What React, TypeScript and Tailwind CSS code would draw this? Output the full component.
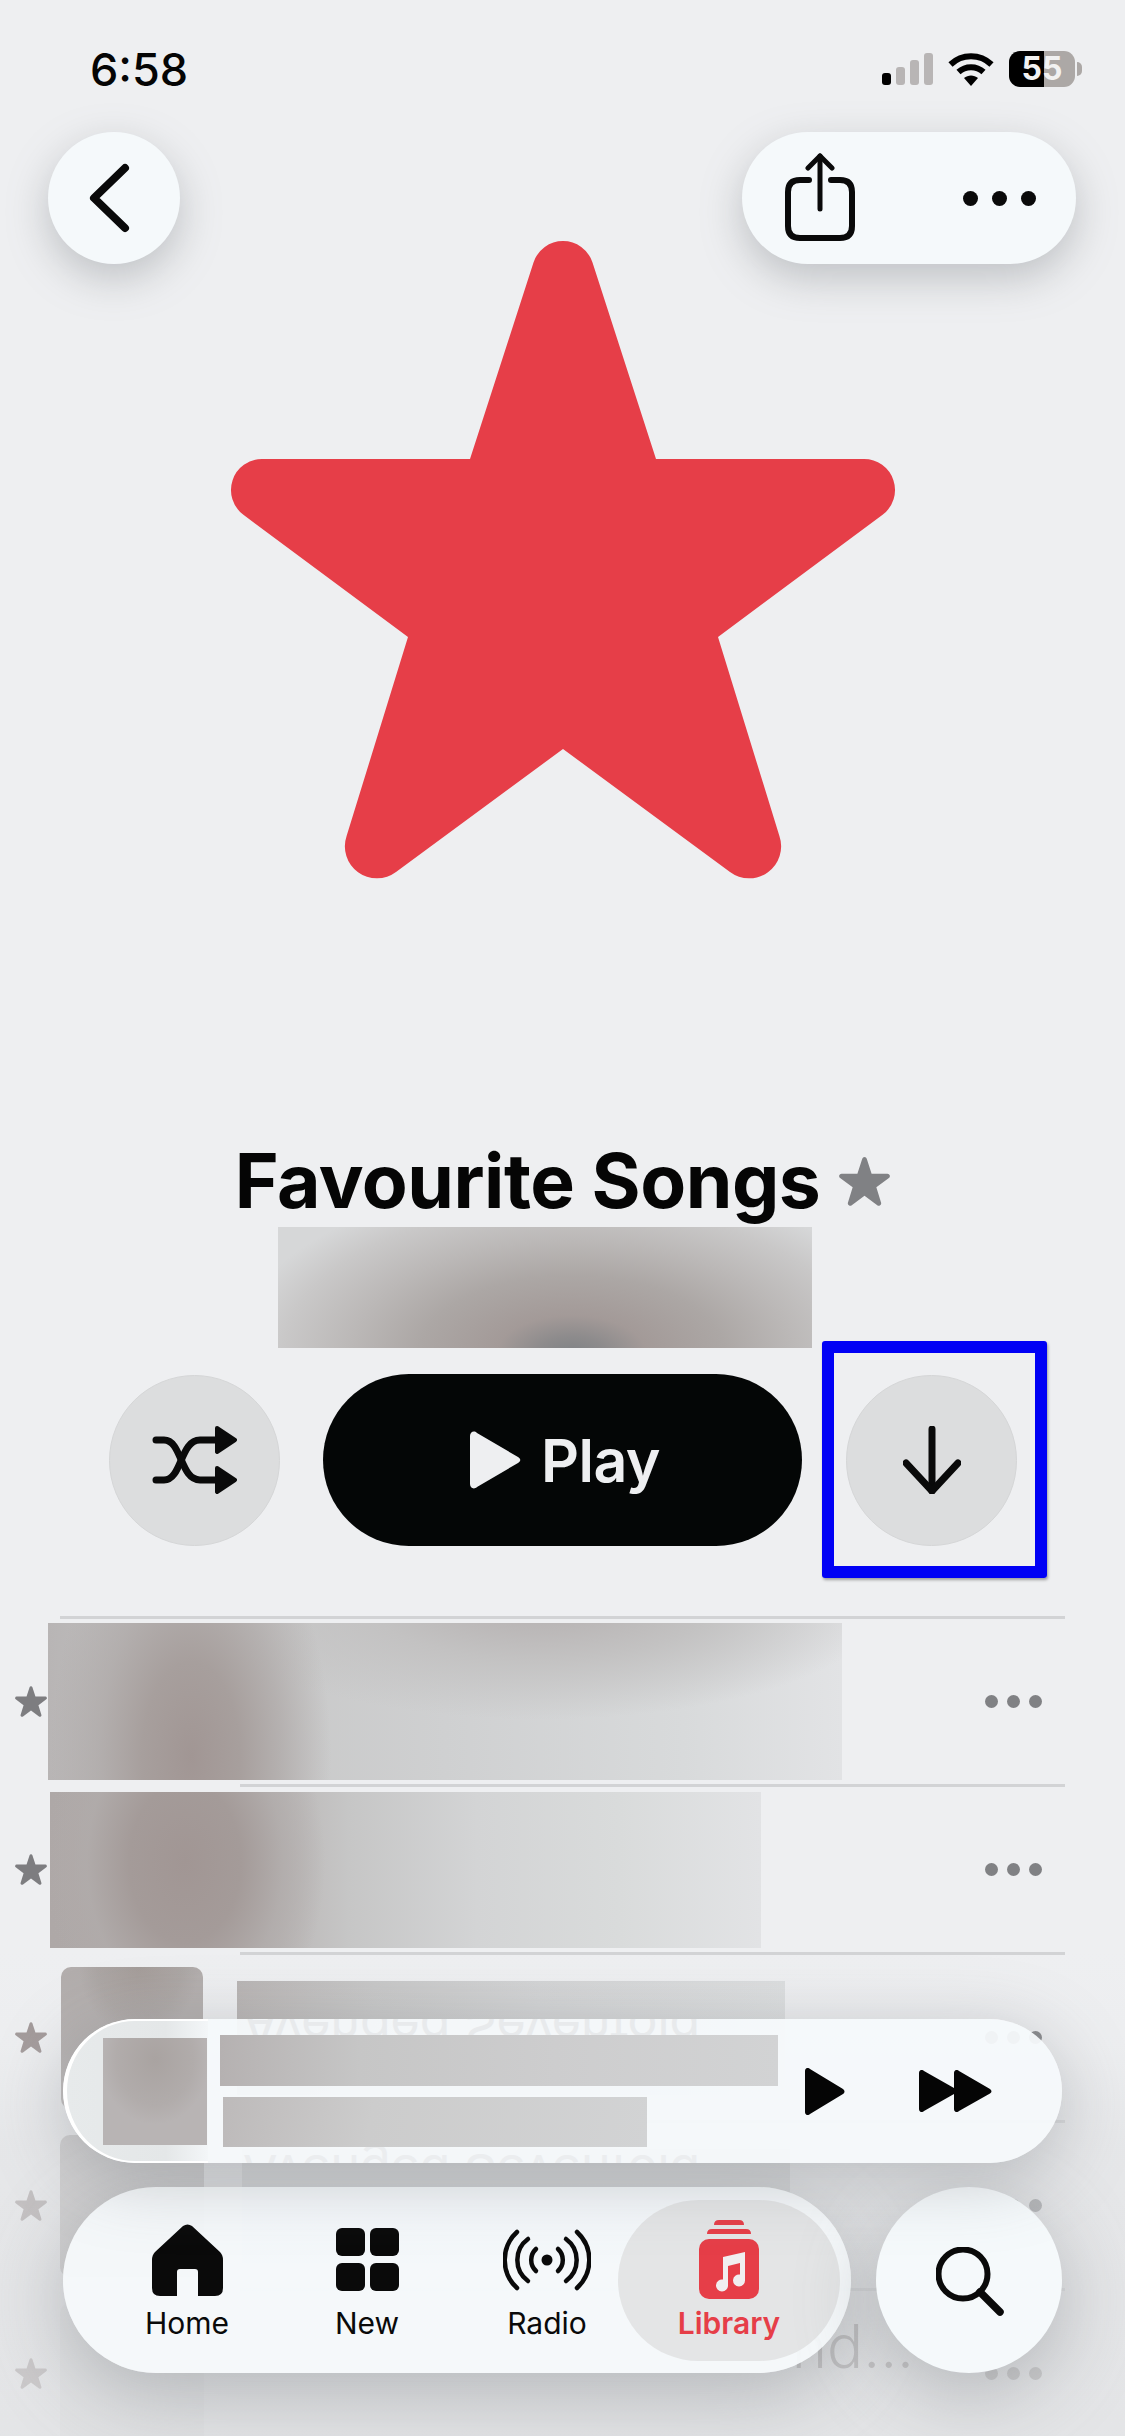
/* Favourite Songs playlist screen: cover star, actions, track rows and floating player + tabs. */

const STAR_PATH =
  "M238 218L301.5 21.5A31 31 0 0 1 360.5 21.5L424 218H632A31 31 0 0 1 650.6 273.8L486 396L547.4 595A32 32 0 0 1 498 631L331 508L164 631A32 32 0 0 1 114.6 595L176 396L11.4 273.8A31 31 0 0 1 30 218Z";

function Star({ className }: { className: string }) {
  return (
    <svg viewBox="-3 0 668 640" className={className} fill="currentColor">
      <path d={STAR_PATH} />
    </svg>
  );
}

function Dots({ className }: { className: string }) {
  return (
    <div className={`flex gap-[9px] ${className}`}>
      <span className="size-[13px] rounded-full bg-current" />
      <span className="size-[13px] rounded-full bg-current" />
      <span className="size-[13px] rounded-full bg-current" />
    </div>
  );
}

function Separator({ inset }: { inset: string }) {
  return <div className={`h-[3px] bg-[#d2d3d5] ${inset}`} />;
}

function TabItem({ label, icon, widthClass }: { label: string; icon: React.ReactNode; widthClass: string }) {
  return (
    <div className={`flex h-[161px] flex-col items-center pt-[20px] ${widthClass}`}>
      <div className="flex h-[80px] items-center">{icon}</div>
      <span className="mt-[5px] text-[30px] leading-[36px] font-normal text-[#0a0a0a]">{label}</span>
    </div>
  );
}

export default function App() {
  return (
    <div className="relative h-[2436px] w-[1125px] overflow-hidden bg-[#eeeff1] [font-family:Inter,sans-serif] text-[#050505]">
      {/* Status bar */}
      <div className="flex h-[132px] items-start justify-between pr-[43px] pl-[90px] pt-[44px]">
        <span className="text-[45px] leading-[52px] font-medium">6:58</span>
        <div className="mt-[7px] flex items-center">
          <div className="flex h-[32px] items-end gap-[5px]">
            <span className="h-[12px] w-[9px] rounded-[3px] bg-black" />
            <span className="h-[18px] w-[9px] rounded-[3px] bg-[#b8b5b5]" />
            <span className="h-[25px] w-[9px] rounded-[3px] bg-[#b8b5b5]" />
            <span className="h-[32px] w-[9px] rounded-[3px] bg-[#b8b5b5]" />
          </div>
          <svg viewBox="0 0 46 33" className="ml-[15px] h-[33px] w-[46px]" fill="none" stroke="#000" strokeWidth="6" strokeLinecap="butt">
            <path d="M2.5 11.5C14 .5 32 .5 43.5 11.5" />
            <path d="M10.5 19C17.5 12.5 28.5 12.5 35.5 19" />
            <path d="M16 25L23 33L30 25C26 21.5 20 21.5 16 25Z" fill="#000" stroke="none" />
          </svg>
          <div className="ml-[15px] flex h-[36px] w-[66px] items-center justify-center rounded-[11px] bg-[linear-gradient(90deg,#000_53%,#aca8a6_53%)] text-[32px] leading-none font-bold text-[#f2f2f2]">
            55
          </div>
          <span className="ml-[2px] h-[14px] w-[5px] rounded-r-full bg-[#aca8a6]" />
        </div>
      </div>

      {/* Top buttons */}
      <div className="flex h-[132px] items-center justify-between pr-[49px] pl-[48px]">
        <button className="flex size-[132px] items-center justify-center rounded-full bg-[#f5f9fb] shadow-[0_14px_40px_rgba(120,125,130,0.4)]">
          <svg viewBox="0 0 44 70" className="mr-[9px] h-[70px] w-[44px]" fill="none" stroke="#0a0a0a" strokeWidth="8" strokeLinecap="round" strokeLinejoin="round">
            <path d="M37 5L6 35L37 65" />
          </svg>
        </button>
        <div className="flex h-[132px] w-[334px] items-center rounded-full bg-[#f5f9fb] pl-[43px] shadow-[0_14px_40px_rgba(120,125,130,0.4)]">
          <svg viewBox="0 0 70 88" className="mb-[2px] h-[88px] w-[70px]" fill="none" stroke="#0a0a0a" strokeWidth="6" strokeLinecap="round" strokeLinejoin="round">
            <path d="M24 27H15C7 27 3 31 3 39V73C3 81 7 85 15 85H55C63 85 67 81 67 73V39C67 31 63 27 55 27H46" />
            <path d="M35 3V56" strokeWidth="5" />
            <path d="M23 15L35 3L47 15" strokeWidth="5" />
          </svg>
          <Dots className="ml-[108px] text-[#0a0a0a] [&>span]:size-[15px] gap-[14px]" />
        </div>
      </div>

      {/* Cover */}
      <div className="-mt-[23px] flex justify-center">
        <Star className="h-[640px] w-[668px] text-[#e63e48]" />
      </div>

      {/* Title */}
      <div className="mt-[255px] flex items-center justify-center gap-[19px]">
        <h1 className="text-[75px] leading-[90px] font-bold tracking-[-0.5px]">Favourite Songs</h1>
        <Star className="h-[49px] w-[51px] text-[#808184]" />
      </div>
      <div className="mt-px ml-[278px] h-[121px] w-[534px] bg-[radial-gradient(ellipse_340px_175px_at_55%_105%,#7f8285_0%,#8d8b8c_10%,#a39a98_22%,#aca7a5_45%,#bbb8b7_65%,#c9c8c8_85%,#d6d7d8_100%)]" />

      {/* Actions */}
      <div className="mt-[26px] flex items-center pl-[109px]">
        <button className="flex size-[171px] items-center justify-center rounded-full border border-[#d5d6d7] bg-[#dcddde]">
          <svg viewBox="0 0 85 68" className="h-[68px] w-[85px]" fill="none" stroke="#0a0a0a" strokeWidth="7" strokeLinecap="round">
            <path d="M4 54H12C30 54 28 14 48 14H66" />
            <path d="M4 14H12C30 14 28 54 48 54H66" />
            <path d="M65 2L83 14L65 26Z" fill="#0a0a0a" strokeWidth="4" strokeLinejoin="round" />
            <path d="M65 42L83 54L65 66Z" fill="#0a0a0a" strokeWidth="4" strokeLinejoin="round" />
          </svg>
        </button>
        <button className="ml-[43px] flex h-[172px] w-[479px] items-center justify-center gap-[20px] rounded-full bg-[#040606] pl-[4px] text-[#eeeff1]">
          <svg viewBox="0 0 52 58" className="h-[58px] w-[52px]" fill="currentColor">
            <path d="M1 5C1 1 5 -1 8 2L49 26C52 28 52 30 49 32L8 56C5 59 1 57 1 53Z" />
          </svg>
          <span className="text-[59px] leading-none font-semibold tracking-[-0.5px]">Play</span>
        </button>
        <div className="relative ml-[44px]">
          <button className="flex size-[171px] items-center justify-center rounded-full border border-[#d5d6d7] bg-[#dcddde]">
            <svg viewBox="0 0 58 68" className="h-[68px] w-[58px]" fill="none" stroke="#0a0a0a" strokeWidth="7" strokeLinecap="round" strokeLinejoin="round">
              <path d="M29 3V65" />
              <path d="M3 37L29 65L55 37" />
            </svg>
          </button>
          {/* Annotation box over the download button */}
          <div className="absolute -top-[34px] -right-[30px] -bottom-[32px] -left-[24px] rounded-[3px] border-[12px] border-[#0000f5] shadow-[1px_2px_3px_rgba(0,0,0,0.35)]" />
        </div>
      </div>

      {/* Track rows */}
      <Separator inset="mt-[70px] ml-[60px] w-[1005px]" />
      <div className="flex h-[165px] items-center pl-[15px]">
        <Star className="h-[31px] w-[32px] text-[#7d7d80]" />
        <div className="ml-px h-[157px] w-[794px] bg-[radial-gradient(ellipse_140px_270px_at_18%_85%,#a19694_0%,#a79f9d_35%,rgba(176,171,170,0.8)_65%,rgba(184,181,181,0)_100%),radial-gradient(ellipse_350px_120px_at_62%_-15%,#b3aeae_0%,#c3c2c2_50%,rgba(200,200,200,0)_100%),linear-gradient(90deg,#b8b5b5_0%,#c8c8c8_25%,#cfd0d1_50%,#d8dadb_80%,#e2e3e5_100%)]" />
        <Dots className="ml-auto mr-[83px] text-[#808184]" />
      </div>
      <Separator inset="ml-[240px] w-[825px]" />
      <div className="flex h-[165px] items-center pl-[15px]">
        <Star className="h-[31px] w-[32px] text-[#7d7d80]" />
        <div className="ml-[3px] h-[156px] w-[711px] bg-[radial-gradient(ellipse_140px_200px_at_19%_45%,#a19694_0%,#a49b99_40%,rgba(176,171,170,0.8)_70%,rgba(184,181,181,0)_100%),linear-gradient(90deg,#aea8a7_0%,#b2acab_25%,#c6c6c6_42%,#d3d4d5_60%,#d9dbdb_80%,#e2e3e5_100%)]" />
        <Dots className="ml-auto mr-[83px] text-[#808184]" />
      </div>
      <Separator inset="ml-[240px] w-[825px]" />
      <div className="flex h-[165px] items-center pl-[15px]">
        <Star className="h-[31px] w-[32px] text-[#9d9494]" />
        <div className="ml-[14px] h-[142px] w-[142px] rounded-[10px] bg-[radial-gradient(ellipse_60px_70px_at_55%_0%,#a39b98_0%,#aaa4a2_70%,#b1acab_100%)]" />
        <div className="ml-[34px] h-[114px] w-[548px] bg-[linear-gradient(90deg,#b7b3b2_0%,#c6c6c6_25%,#d2d3d4_55%,#dcdedf_100%)]" />
        <Dots className="ml-auto mr-[83px] text-[#808184]" />
      </div>
      <Separator inset="ml-[240px] w-[825px]" />
      <div className="flex h-[165px] items-center pl-[15px]">
        <Star className="h-[31px] w-[32px] text-[#9d9494]" />
        <div className="ml-[13px] h-[142px] w-[144px] rounded-[10px] bg-[#bdbaba]" />
        <div className="ml-[38px] h-[114px] w-[548px] bg-[#d2d3d4]" />
        <Dots className="ml-auto mr-[83px] text-[#808184]" />
      </div>
      <Separator inset="ml-[240px] w-[825px]" />
      <div className="flex h-[165px] items-center pl-[15px]">
        <Star className="h-[31px] w-[32px] text-[#9d9494]" />
        <div className="ml-[13px] h-[142px] w-[144px] rounded-[10px] bg-[#e4e5e6]" />
        <div className="mb-[56px] ml-[33px] w-[677px] text-right text-[60px] leading-none font-light text-[#8f8a8a]">nd...</div>
        <Dots className="ml-auto mr-[83px] text-[#9d9a9a]" />
      </div>

      {/* Fade under the floating bars */}
      <div className="pointer-events-none absolute inset-x-0 top-[1950px] bottom-0 bg-[linear-gradient(180deg,rgba(226,227,229,0)_0%,rgba(226,227,229,0.1)_20%,rgba(224,225,227,0.55)_40%,rgba(224,225,227,0.72)_100%)]" />

      {/* Floating mini player and tab bar */}
      <div className="absolute top-[2019px] left-[63px] flex w-[999px] flex-col gap-[24px]">
        <div className="relative flex h-[144px] items-center overflow-hidden rounded-full bg-[#f5f9fb]/95 shadow-[0_14px_70px_rgba(110,115,120,0.38)]">
          <div className="absolute inset-y-0 left-0 w-[145px] rounded-l-full border-y-2 border-l-[4px] border-white bg-[linear-gradient(90deg,#e7eaeb_0%,#e4e7e8_70%,#f3f6f8_100%)]" />
          <span className="absolute top-[-21px] left-[180px] -scale-y-100 text-[50px] leading-[60px] font-normal whitespace-nowrap text-[#e8eaec]">Avenged Sevenfold</span>
          <span className="absolute top-[124px] left-[180px] -scale-y-100 text-[50px] leading-[60px] font-normal whitespace-nowrap text-[#ebedef]">Avenged Sevenfold</span>
          <div className="relative ml-[40px] h-[107px] w-[104px] bg-[radial-gradient(ellipse_55px_65px_at_50%_20%,#a9a3a1_0%,#b1acab_70%,#b8b4b4_100%)]" />
          <div className="relative ml-[13px] flex flex-col">
            <div className="h-[51px] w-[558px] bg-[linear-gradient(90deg,#b5b1b1_0%,#c6c6c6_25%,#cdcdce_60%,#d2d3d4_100%)]" />
            <div className="mt-[11px] ml-[3px] h-[50px] w-[424px] bg-[linear-gradient(100deg,#bdbaba_0%,#cccccc_35%,#d2d3d4_100%)]" />
          </div>
          <svg viewBox="0 0 40 47" className="relative ml-[27px] h-[47px] w-[40px]" fill="#050505">
            <path d="M0 3C0 0 3 -1 5 1L38 21C40 22.500 40 24.500 38 26L5 46C3 48 0 47 0 44Z" />
          </svg>
          <svg viewBox="0 0 73 42" className="relative ml-[74px] h-[42px] w-[73px]" fill="#050505">
            <path d="M0 3C0 0 3 -1 5 1L35 18V3C35 0 38 -1 40 1L71 19C73 20.500 73 22 71 23.500L40 41C38 43 35 42 35 39V24L5 41C3 43 0 42 0 39Z" />
          </svg>
        </div>

        <div className="flex items-center gap-[25px]">
          <div className="flex h-[186px] w-[788px] items-center rounded-full bg-[#f5f9fb]/95 pl-[34px] shadow-[0_20px_80px_rgba(110,115,120,0.42)]">
            <TabItem
              label="Home"
              widthClass="w-[180px]"
              icon={
                <svg viewBox="0 0 71 72" className="h-[72px] w-[71px]" fill="#0a0a0a">
                  <path d="M31 2Q35.500 -1 40 2L68 28Q71 31 71 36V64Q71 72 63 72H46V48Q46 45 43 45H28Q25 45 25 48V72H8Q0 72 0 64V36Q0 31 3 28Z" />
                </svg>
              }
            />
            <TabItem
              label="New"
              widthClass="w-[180px]"
              icon={
                <svg viewBox="0 0 63 63" className="h-[63px] w-[63px]" fill="#0a0a0a">
                  <rect x="0" y="0" width="29" height="28" rx="6" />
                  <rect x="34" y="0" width="29" height="28" rx="6" />
                  <rect x="0" y="35" width="29" height="28" rx="6" />
                  <rect x="34" y="35" width="29" height="28" rx="6" />
                </svg>
              }
            />
            <TabItem
              label="Radio"
              widthClass="w-[180px]"
              icon={
                <svg viewBox="0 0 88 62" className="h-[62px] w-[88px]" fill="none" stroke="#0a0a0a" strokeWidth="4.5" strokeLinecap="round">
                  <path d="M14 3A38 38 0 0 0 14 59" />
                  <path d="M25 10A26 26 0 0 0 25 52" />
                  <path d="M33 20A15 15 0 0 0 33 42" />
                  <path d="M74 3A38 38 0 0 1 74 59" />
                  <path d="M63 10A26 26 0 0 1 63 52" />
                  <path d="M55 20A15 15 0 0 1 55 42" />
                  <circle cx="44" cy="31" r="5.500" fill="#0a0a0a" stroke="none" />
                </svg>
              }
            />
            <div className="-ml-[19px] flex h-[161px] w-[222px] flex-col items-center rounded-full bg-[#e4e5e6] pt-[20px]">
              <svg viewBox="0 0 60 80" className="h-[80px] w-[60px]" fill="#e63e48">
                <path d="M15 5Q15 0 20 0H40Q45 0 45 5Z" />
                <path d="M8 14Q8 9 13 9H47Q52 9 52 14Z" />
                <rect x="0" y="19" width="60" height="60" rx="10" />
                <path d="M24 37L46 32V60A6 6 0 1 1 41 54.500V43L29 46V65A6 6 0 1 1 24 59.500Z" fill="#f1eef0" />
              </svg>
              <span className="mt-[5px] text-[30px] leading-[36px] font-semibold text-[#e63e48]">Library</span>
            </div>
          </div>
          <button className="flex size-[186px] items-center justify-center rounded-full bg-[#f5f9fb] shadow-[0_20px_80px_rgba(110,115,120,0.42)]">
            <svg viewBox="0 0 70 70" className="mt-[3px] ml-[3px] h-[70px] w-[70px]" fill="none" stroke="#0a0a0a" strokeWidth="6" strokeLinecap="round">
              <circle cx="27" cy="27" r="24.500" />
              <path d="M44 45L64 65" strokeWidth="7.500" />
            </svg>
          </button>
        </div>
      </div>
    </div>
  );
}
